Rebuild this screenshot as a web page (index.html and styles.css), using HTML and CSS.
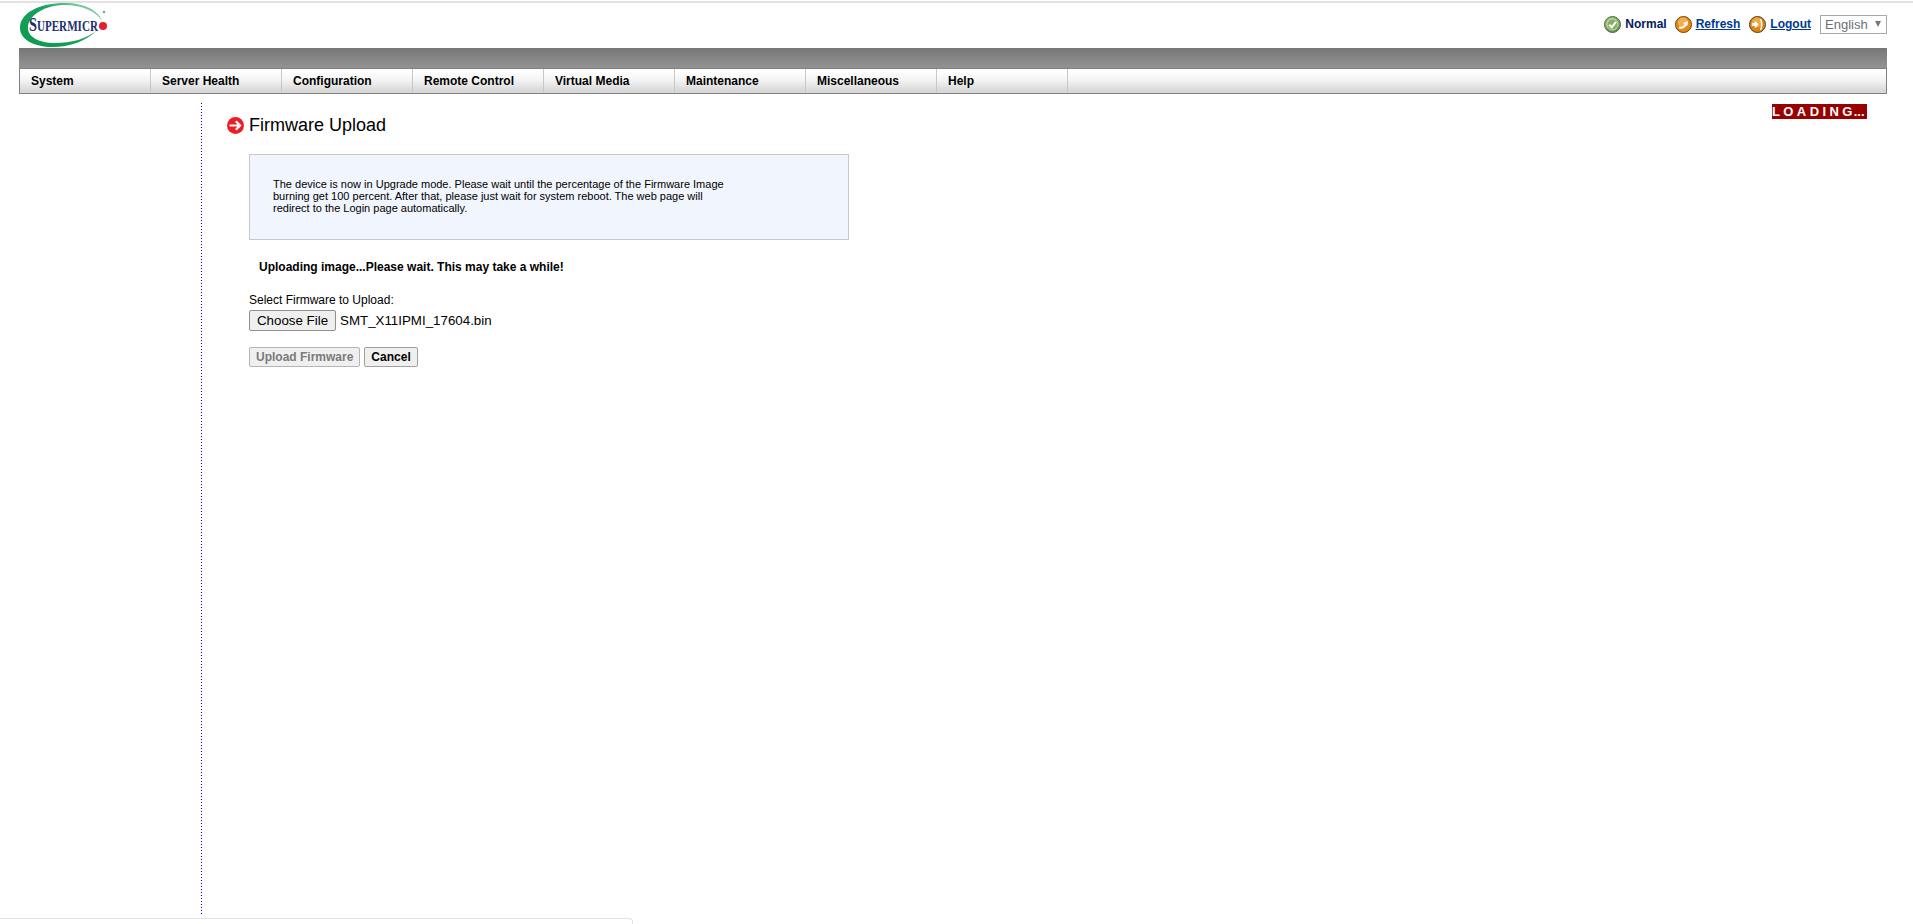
FILE: index.html
```html
<!DOCTYPE html>
<html lang="en">
<head>
<meta charset="utf-8">
<title>Firmware Upload</title>
<link rel="stylesheet" href="styles.css">
</head>
<body>
<div class="page">
  <header class="top">
    <svg class="logo" viewBox="0 0 90 46" width="90" height="46" aria-hidden="true">
      <defs>
        <linearGradient id="sw" x1="0" y1="1" x2="1" y2="0">
          <stop offset="0" stop-color="#0a9a4c"/>
          <stop offset=".6" stop-color="#1aa35c"/>
          <stop offset="1" stop-color="#b5dfc8"/>
        </linearGradient>
        <radialGradient id="gr" cx=".4" cy=".35" r=".7">
          <stop offset="0" stop-color="#b9d69c"/>
          <stop offset="1" stop-color="#5f8a48"/>
        </radialGradient>
      </defs>
      <path fill="url(#sw)" d="M1 25C1 10 20 0 46 0c20 0 34 8 37 18C78 9 64 2 46 2 26 2 9 12 9 25c0 9 11 15 27 15 16 0 32-4 42-13C68 38 50 44 34 44 14 44 1 36 1 25Z"/>
      <circle cx="84" cy="23" r="4" fill="#e3202c"/>
      <circle cx="85" cy="9" r="1.300" fill="#8a9bb0"/>
      <text class="logo-text" transform="translate(10 28) scale(.793 1)"><tspan class="logo-cap">S</tspan>UPERMICR</text>
    </svg>
    <div class="tools">
      <svg class="tool-icon" viewBox="0 0 17 17" width="17" height="17" aria-hidden="true">
        <circle cx="8.500" cy="8.500" r="8" fill="url(#gr)" stroke="#4f7040"/>
        <circle cx="8.500" cy="8.500" r="5.500" fill="#86ad66" stroke="#e4eed9" stroke-width=".7"/>
        <path d="M5.300 8.800 7.800 11.300 12 5.800" fill="none" stroke="#fff" stroke-width="2"/>
      </svg>
      <span class="tool-label">Normal</span>
      <svg class="tool-icon" viewBox="0 0 17 17" width="17" height="17" aria-hidden="true">
        <circle cx="8.500" cy="8.500" r="8" fill="#e58a14" stroke="#6f4410"/>
        <circle cx="8" cy="6.500" r="5" fill="#f2b04a"/>
        <path d="M4 11.500c3 .8 5.500-.3 6.500-3" fill="none" stroke="#fff" stroke-width="2"/>
        <path d="M8 7l5-2-.8 5Z" fill="#fff"/>
      </svg>
      <a class="tool-link" href="#">Refresh</a>
      <svg class="tool-icon tool-icon-wide" viewBox="0 0 17 17" width="17" height="17" aria-hidden="true">
        <circle cx="8.500" cy="8.500" r="8" fill="#d98618" stroke="#5f3c10"/>
        <circle cx="8" cy="6.500" r="5" fill="#eeaa48"/>
        <path d="M2.800 7h3V4.800l3.800 3.700-3.800 3.700V10h-3Z" fill="#fff"/>
        <path d="M11.500 3c1.600 3.500 1.600 7.500 0 11" fill="none" stroke="#fff" stroke-width="1.400"/>
      </svg>
      <a class="tool-link" href="#">Logout</a>
      <div class="lang"><span>English</span><span class="lang-arrow"></span></div>
    </div>
  </header>

  <div class="band"></div>
  <nav class="menu">
    <a class="menu-item" href="#">System</a>
    <a class="menu-item" href="#">Server Health</a>
    <a class="menu-item" href="#">Configuration</a>
    <a class="menu-item" href="#">Remote Control</a>
    <a class="menu-item" href="#">Virtual Media</a>
    <a class="menu-item" href="#">Maintenance</a>
    <a class="menu-item" href="#">Miscellaneous</a>
    <a class="menu-item" href="#">Help</a>
  </nav>

  <div class="body">
    <aside class="side"></aside>
    <main class="content">
      <div class="loading">LOADING<span class="loading-dots">...</span></div>
      <h1 class="title">
        <svg class="title-icon" viewBox="0 0 17 17" width="17" height="17" aria-hidden="true">
          <circle cx="8.500" cy="8.500" r="8.500" fill="#ee1c25"/>
          <path d="M2.500 8.500h10M8.800 4.200l4.300 4.300-4.300 4.300" fill="none" stroke="#fff" stroke-width="2.200"/>
        </svg>
        Firmware Upload
      </h1>
      <div class="inner">
        <div class="notice">
          <p>The device is now in Upgrade mode. Please wait until the percentage of the Firmware Image<br>burning get 100 percent. After that, please just wait for system reboot. The web page will<br>redirect to the Login page automatically.</p>
        </div>
        <p class="uploading">Uploading image...Please wait. This may take a while!</p>
        <label class="select-label">Select Firmware to Upload:</label>
        <div class="file-row">
          <button class="btn-file" type="button">Choose File</button>
          <span class="file-name">SMT_X11IPMI_17604.bin</span>
        </div>
        <div class="actions">
          <button class="btn" type="button" disabled>Upload Firmware</button>
          <button class="btn" type="button">Cancel</button>
        </div>
      </div>
    </main>
  </div>
</div>
<div class="status-edge"></div>
</body>
</html>
```

FILE: styles.css
```css
* { box-sizing: border-box; }

html, body { height: 100%; }

body {
  margin: 0;
  background: #fff;
  color: #000;
  font-family: "Liberation Sans", Arial, sans-serif;
  overflow: hidden;
}

.page {
  height: 924px;
  padding: 0 26px 9px 19px;
  display: flex;
  flex-direction: column;
  border-top: 2px solid #e2e2e2;
  margin-top: 1px;
}

.top {
  height: 45px;
  display: flex;
  justify-content: space-between;
  align-items: flex-start;
}

.logo { flex: none; }

.logo-text {
  font-family: "Liberation Serif", "Times New Roman", serif;
  font-size: 14px;
  font-weight: 700;
  fill: #1c2f6e;
}

.logo-cap { font-size: 18px; }

.tools {
  display: flex;
  align-items: center;
  margin-top: 12px;
  height: 18px;
  font-size: 12px;
  font-weight: 700;
}

.tool-icon {
  flex: none;
  margin-left: 8px;
  margin-right: 4px;
}

.tool-icon-wide { margin-left: 9px; }

.tool-label { color: #002060; }

.tool-link {
  color: #00398f;
  text-decoration: underline;
}

.lang {
  width: 67px;
  height: 19px;
  margin-left: 9px;
  padding: 0 5px 0 4px;
  display: flex;
  align-items: center;
  justify-content: space-between;
  border: 1px solid #a9a9a9;
  color: #6b6f78;
  font-size: 13px;
  font-weight: 400;
}

.lang-arrow {
  width: 0;
  height: 0;
  border-left: 3.500px solid transparent;
  border-right: 3.500px solid transparent;
  border-top: 6px solid #777;
}

.band {
  flex: none;
  height: 20px;
  background: linear-gradient(#777, #939393);
}

.menu {
  flex: none;
  height: 26px;
  display: flex;
  border: 1px solid #808080;
  background: linear-gradient(#fff 10%, #f2f2f2 50%, #d8d8d8 90%);
}

.menu-item {
  width: 131px;
  padding-left: 11px;
  line-height: 24px;
  border-right: 1px solid #c8c8c8;
  color: #000;
  font-size: 12px;
  font-weight: 700;
  text-decoration: none;
}

.body {
  flex: 1;
  display: flex;
  min-height: 0;
  margin-top: 9px;
}

.side {
  flex: none;
  width: 183px;
  background: repeating-linear-gradient(#0000ff 0 1px, transparent 1px 3px) right top / 1px 100% no-repeat;
}

.content {
  position: relative;
  flex: 1;
  padding: 11px 0 0 25px;
}

.loading {
  position: absolute;
  top: 1px;
  right: 20px;
  width: 95px;
  height: 15px;
  background: #990000;
  color: #fff;
  font-size: 13px;
  font-weight: 700;
  line-height: 15px;
  letter-spacing: 3.400px;
  white-space: nowrap;
}

.loading-dots {
  margin-left: -2px;
  letter-spacing: 0;
}

.title {
  margin: 0;
  display: flex;
  align-items: center;
  gap: 5px;
  height: 22px;
  font-size: 18px;
  font-weight: 400;
  color: #000;
}

.title-icon { flex: none; }

.inner { padding: 18px 0 0 22px; }

.notice {
  width: 600px;
  height: 86px;
  padding: 23px 0 0 23px;
  background: #f1f5fd;
  border: 1px solid #c8c8c8;
}

.notice p {
  margin: 0;
  font-size: 11px;
  line-height: 12px;
}

.uploading {
  margin: 20px 0 0 10px;
  font-size: 12px;
  font-weight: 700;
  line-height: 14px;
}

.select-label {
  display: block;
  margin-top: 19px;
  font-size: 12px;
  line-height: 14px;
}

.file-row {
  display: flex;
  align-items: center;
  margin-top: 3px;
  height: 21px;
}

.btn-file {
  width: 87px;
  height: 21px;
  padding: 0 0 1px;
  background: #efefef;
  border: 1px solid #909090;
  border-radius: 2px;
  color: #000;
  font: 400 13.333px "Liberation Sans", Arial, sans-serif;
}

.file-name {
  margin: 0 0 1px 4px;
  font-size: 13.333px;
}

.actions {
  display: flex;
  gap: 4px;
  margin-top: 16px;
}

.btn {
  height: 20px;
  padding: 0 6px;
  background: #efefef;
  border: 1px solid #a0a0a0;
  border-radius: 2px;
  color: #000;
  font: 700 12px "Liberation Sans", Arial, sans-serif;
}

.btn:disabled {
  color: #7a7a7a;
  border-color: #b5b5b5;
}

.status-edge {
  position: fixed;
  left: -4px;
  bottom: 0;
  width: 637px;
  height: 6px;
  border: 1px solid #e2e2e2;
  border-bottom: 0;
  border-radius: 0 4px 0 0;
}
```
